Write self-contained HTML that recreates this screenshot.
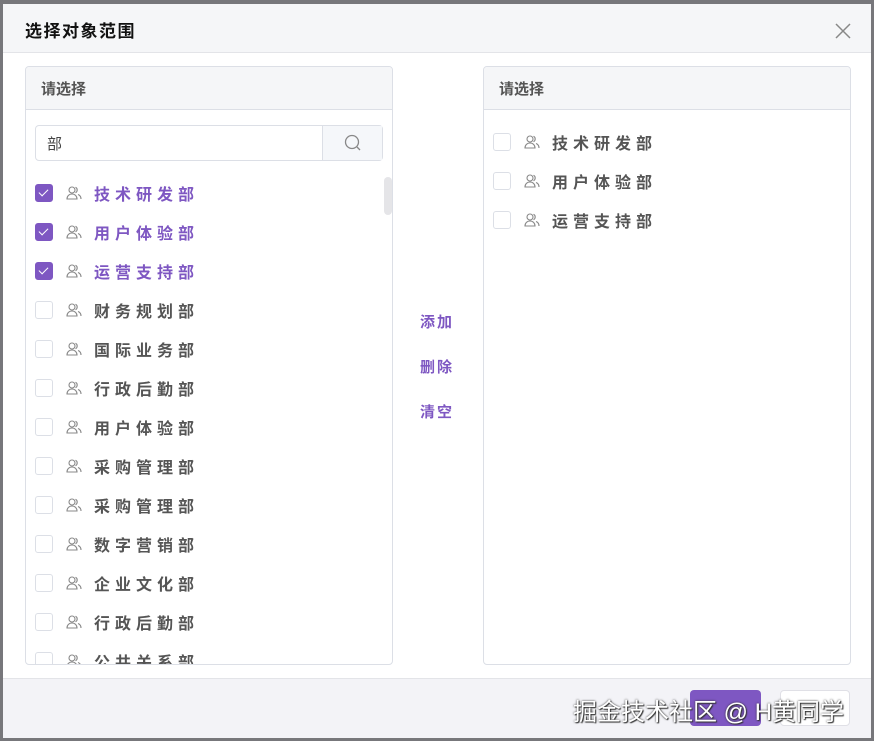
<!DOCTYPE html>
<html><head><meta charset="utf-8"><style>
*{box-sizing:border-box;margin:0;padding:0}
body{width:874px;height:741px;background:#77777b;position:relative;overflow:hidden;font-family:"Liberation Sans","Noto Sans CJK SC",sans-serif}
.dlg{position:absolute;left:3px;top:4px;width:868px;height:734px;background:#fff}
.hd{position:absolute;left:0;top:0;width:868px;height:49px;background:#f5f6f8;border-bottom:1px solid #e3e4e8}
.title{position:absolute;left:22px;top:13px;font-size:17px;font-weight:bold;color:#111;letter-spacing:1.5px}
.close{position:absolute;left:832px;top:19px}
.panel{position:absolute;top:62px;width:368px;height:599px;border:1px solid #dcdfe6;border-radius:4px;overflow:hidden;background:#fff}
.ph{height:43px;background:#f5f6f8;border-bottom:1px solid #dcdfe6;padding:11px 0 0 15px;font-size:15px;font-weight:bold;color:#555}
.search{position:absolute;left:9px;top:58px;width:348px;height:36px;border:1px solid #dcdfe6;border-radius:4px;background:#fff}
.search span{position:absolute;left:11px;top:7px;font-size:15px;color:#444}
.sbtn{position:absolute;right:0;top:0;width:60px;height:34px;background:#f5f7fa;border-left:1px solid #dcdfe6}
.item{position:absolute;left:9px;height:20px;display:flex;align-items:center}
.cb{width:18px;height:18px;border:1px solid #dcdfe6;border-radius:3px;background:#fff;position:relative}
.cb.on{background:#7e57c2;border-color:#7e57c2}
.cb.on:after{content:"";position:absolute;left:5px;top:2px;width:4px;height:8px;border:solid #fff;border-width:0 1.5px 1.5px 0;transform:rotate(45deg)}
.ic{margin-left:13px;width:16px;height:16px}
.tx{margin-left:12px;font-size:16px;font-weight:bold;letter-spacing:5px;color:#555}
.item.on .tx{color:#7e57c2}
.scroll{position:absolute;left:358px;top:110px;width:8px;height:38px;background:#e5e5e8;border-radius:4px}
.mid{position:absolute;left:417px;font-size:15px;font-weight:bold;color:#7e57c2;letter-spacing:2px}
.ft{position:absolute;left:0;top:674px;width:868px;height:60px;background:#f3f3f7;border-top:1px solid #e3e4e8}
.ok{position:absolute;left:687px;top:686px;width:71px;height:36px;background:#7e57c2;border-radius:4px}
.cancel{position:absolute;left:777px;top:686px;width:70px;height:36px;background:#fff;border-radius:4px;border:1px solid #e0e0e6}
.wm{position:absolute;left:570px;top:688px;font-size:24px;color:#fff;text-shadow:0 0 2px #333,1px 1px 1px #333;white-space:nowrap}
</style></head><body>
<div class="dlg">
<div class="hd"><div class="title">选择对象范围</div>
<svg class="close" width="16" height="16" viewBox="0 0 16 16"><path d="M1 1L15 15M15 1L1 15" stroke="#888" stroke-width="1.5"/></svg></div>

<div class="panel" style="left:22px">
<div class="ph">请选择</div>
<div class="search"><span>部</span><div class="sbtn"><svg width="60" height="34" viewBox="0 0 60 34"><circle cx="29" cy="16" r="6.5" fill="none" stroke="#888" stroke-width="1.3"/><path d="M34 21L37 24" stroke="#888" stroke-width="1.3"/></svg></div></div>
<div class="scroll"></div>
<div id="L"></div>
</div>

<div class="mid" style="top:307px">添加</div>
<div class="mid" style="top:352px">删除</div>
<div class="mid" style="top:397px">清空</div>

<div class="panel" style="left:480px">
<div class="ph">请选择</div>
<div id="R"></div>
</div>

<div class="ft"></div>
<div class="ok"></div><div class="cancel"></div>
<div class="wm">掘金技术社区 @ H黄同学</div>
</div>
<script>
var ic='<svg class="ic" viewBox="0 0 16 16" fill="none" stroke="#888" stroke-width="1.1"><circle cx="6" cy="5" r="3"/><path d="M1 14c0-3 2.2-5 5-5s5 2 5 5z"/><path d="M9.5 2.3a3 3 0 0 1 0 5.4M12 9.5c1.8.7 3 2.3 3 4.5"/></svg>';
function row(t,y,on){return '<div class="item'+(on?' on':'')+'" style="top:'+y+'px"><div class="cb'+(on?' on':'')+'"></div>'+ic+'<span class="tx">'+t+'</span></div>';}
var L=["技术研发部","用户体验部","运营支持部","财务规划部","国际业务部","行政后勤部","用户体验部","采购管理部","采购管理部","数字营销部","企业文化部","行政后勤部","公共关系部"];
var h='';L.forEach(function(t,i){h+=row(t,116+i*39,i<3)});document.getElementById('L').outerHTML=h;
var r='';["技术研发部","用户体验部","运营支持部"].forEach(function(t,i){r+=row(t,65+i*39,false)});document.getElementById('R').outerHTML=r;
</script>
</body></html>
